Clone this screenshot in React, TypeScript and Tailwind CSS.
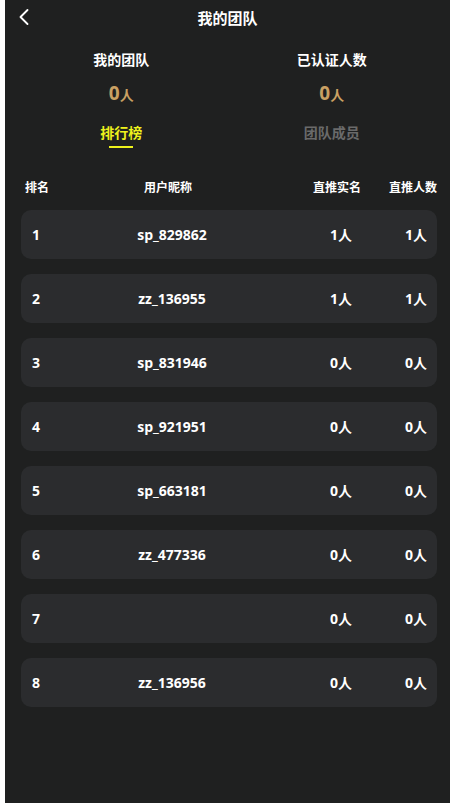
import { ChevronLeft } from 'lucide-react';

const rows = [
  { rank: 1, name: 'sp_829862', real: 1, total: 1 },
  { rank: 2, name: 'zz_136955', real: 1, total: 1 },
  { rank: 3, name: 'sp_831946', real: 0, total: 0 },
  { rank: 4, name: 'sp_921951', real: 0, total: 0 },
  { rank: 5, name: 'sp_663181', real: 0, total: 0 },
  { rank: 6, name: 'zz_477336', real: 0, total: 0 },
  { rank: 7, name: '', real: 0, total: 0 },
  { rank: 8, name: 'zz_136956', real: 0, total: 0 },
];

export default function App() {
  return (
    <div
      className="flex min-h-[803px] w-[450px] bg-white"
      style={{ fontFamily: '"Open Sans", "Noto Sans CJK SC", sans-serif' }}
    >
      <div className="ml-[5px] flex-1 bg-[#1f2020] text-white">
        {/* Top bar */}
        <header className="relative flex h-[36px] items-center justify-center">
          <ChevronLeft className="absolute left-[5px] top-[3px] h-[28px] w-[28px] text-white" strokeWidth={1.6} />
          <span className="text-[15px] font-bold">我的团队</span>
        </header>

        {/* Stats */}
        <div className="mt-[14px] flex">
          <div className="flex w-1/2 flex-col items-center pl-[10px]">
            <span className="text-[14px] font-bold leading-[20px]">我的团队</span>
            <span className="mt-[12px] text-[19px] font-bold leading-[22px] text-[#c9a063]">
              0<span className="text-[14px]">人</span>
            </span>
          </div>
          <div className="flex w-1/2 flex-col items-center pr-[14px]">
            <span className="text-[14px] font-bold leading-[20px]">已认证人数</span>
            <span className="mt-[12px] text-[19px] font-bold leading-[22px] text-[#c9a063]">
              0<span className="text-[14px]">人</span>
            </span>
          </div>
        </div>

        {/* Tabs */}
        <div className="mt-[17px] flex">
          <div className="flex w-1/2 flex-col items-center pl-[10px]">
            <span className="text-[14px] font-bold leading-[20px] text-[#eef21c]">排行榜</span>
            <span className="mt-[3px] h-[1.5px] w-[24px] bg-[#eef21c]" />
          </div>
          <div className="flex w-1/2 flex-col items-center pr-[14px]">
            <span className="text-[14px] font-bold leading-[20px] text-[#6a6a6a]">团队成员</span>
          </div>
        </div>

        {/* Table header */}
        <div className="ml-[20px] mr-[13px] mt-[31px] flex text-[12px] font-bold leading-[18px]">
          <span className="w-[60px]">排名</span>
          <span className="w-[166px] text-center">用户昵称</span>
          <span className="w-[110px] text-right">直推实名</span>
          <span className="flex-1 text-right">直推人数</span>
        </div>

        {/* Rows */}
        <div className="ml-[16px] mr-[13px] mt-[13px] flex flex-col gap-[15px]">
          {rows.map((r) => (
            <div
              key={r.rank}
              className="flex h-[49px] items-center rounded-[10px] bg-[#2b2c2e] pl-[11px] pr-[10px] text-[14px] font-bold"
            >
              <span className="w-[60px]">{r.rank}</span>
              <span className="w-[160px] text-center">{r.name}</span>
              <span className="w-[100px] text-right">{r.real}人</span>
              <span className="flex-1 text-right">{r.total}人</span>
            </div>
          ))}
        </div>
      </div>
    </div>
  );
}
